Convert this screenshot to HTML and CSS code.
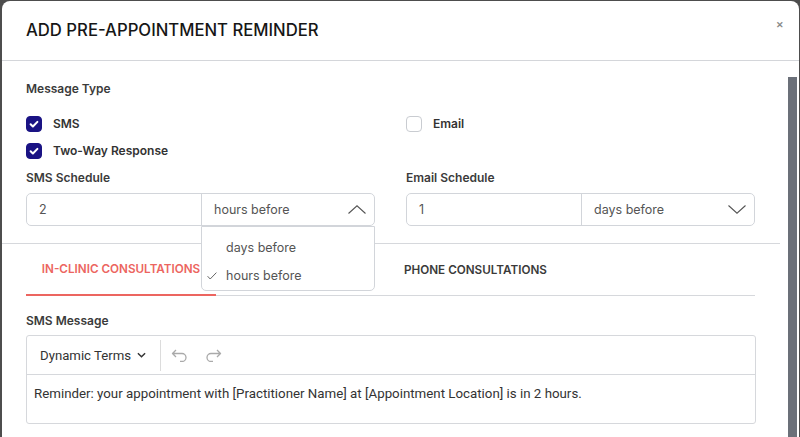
FILE: index.html
```html
<!DOCTYPE html>
<html>
<head>
<meta charset="utf-8">
<link rel="stylesheet" href="styles.css">
</head>
<body>
<div class="modal">
  <div class="modal-header">
    <h1 class="title">ADD PRE-APPOINTMENT REMINDER</h1>
    <span class="close">&#x2715;</span>
  </div>
  <div class="modal-body">
    <div class="content">
      <div class="section-label">Message Type</div>
      <div class="grid">
        <div class="col">
          <label class="check-row"><span class="box checked"><svg viewBox="0 0 16 16" width="16" height="16"><path d="M4.6 8.2l2.3 2.3 4.5-4.6" fill="none" stroke="#fff" stroke-width="2" stroke-linecap="round" stroke-linejoin="round"/></svg></span><span class="check-label">SMS</span></label>
          <label class="check-row second"><span class="box checked"><svg viewBox="0 0 16 16" width="16" height="16"><path d="M4.6 8.2l2.3 2.3 4.5-4.6" fill="none" stroke="#fff" stroke-width="2" stroke-linecap="round" stroke-linejoin="round"/></svg></span><span class="check-label">Two-Way Response</span></label>
        </div>
        <div class="col">
          <label class="check-row"><span class="box"></span><span class="check-label">Email</span></label>
        </div>
      </div>
      <div class="grid schedules">
        <div class="col">
          <div class="field-label">SMS Schedule</div>
          <div class="input-group">
            <div class="num">2</div>
            <div class="select open">
              <span>hours before</span>
              <svg class="chev" viewBox="0 0 18 9" width="18" height="9"><path d="M0.5 8.5L9 0.8l8.5 7.7" fill="none" stroke="#555" stroke-width="1.1"/></svg>
              <div class="menu">
                <div class="item">days before</div>
                <div class="item selected"><svg class="tick" viewBox="0 0 10 8" width="10" height="8"><path d="M0.6 4.2l2.6 2.8L9.4 0.6" fill="none" stroke="#666" stroke-width="1"/></svg>hours before</div>
              </div>
            </div>
          </div>
        </div>
        <div class="col">
          <div class="field-label">Email Schedule</div>
          <div class="input-group">
            <div class="num">1</div>
            <div class="select">
              <span>days before</span>
              <svg class="chev" viewBox="0 0 18 9" width="18" height="9"><path d="M0.5 0.5L9 8.2l8.5-7.7" fill="none" stroke="#555" stroke-width="1.1"/></svg>
            </div>
          </div>
        </div>
      </div>
      <div class="divider"></div>
      <div class="tabs">
        <div class="tab active">IN-CLINIC CONSULTATIONS</div>
        <div class="tab second-tab">PHONE CONSULTATIONS</div>
      </div>
      <div class="field-label msg-label">SMS Message</div>
      <div class="editor">
        <div class="toolbar">
          <div class="terms">Dynamic Terms <svg viewBox="0 0 10 6" width="9" height="6"><path d="M1 1l4 4 4-4" fill="none" stroke="#333" stroke-width="1.6"/></svg></div>
          <div class="sep"></div>
          <svg class="hist" viewBox="0 0 18 14" width="18" height="14"><path d="M5 2L1.5 5.5 5 9M1.5 5.5h9.5a4 4 0 0 1 0 8H9" fill="none" stroke="#aaa" stroke-width="1.3" stroke-linejoin="round"/></svg>
          <svg class="hist" viewBox="0 0 18 14" width="18" height="14"><path d="M13 2l3.5 3.5L13 9M16.5 5.5H7a4 4 0 0 0 0 8h2" fill="none" stroke="#aaa" stroke-width="1.3" stroke-linejoin="round"/></svg>
        </div>
        <div class="editor-body">Reminder: your appointment with [Practitioner Name] at [Appointment Location] is in 2 hours.</div>
      </div>
    </div>
    <div class="scrollbar"><div class="thumb"></div></div>
  </div>
</div>
</body>
</html>
```

FILE: styles.css
```css
* { box-sizing: border-box; }
html, body { margin: 0; padding: 0; height: 100%; }
body {
  background: #4d4d4d;
  font-family: Inter, "Noto Sans", sans-serif;
  overflow: hidden;
}
.modal {
  margin: 1px 1px 0 2px;
  height: 436px;
  background: #fff;
  border-radius: 8px 8px 0 0;
  display: flex;
  flex-direction: column;
  overflow: hidden;
}
.modal-header {
  height: 60px;
  border-bottom: 1px solid #d4d6da;
  display: flex;
  align-items: center;
  justify-content: space-between;
  padding: 0 15px 0 24px;
  flex: none;
}
.title {
  margin: 0;
  font-size: 16.7px;
  font-weight: 500;
  color: #161616;
  letter-spacing: 0;
  padding-bottom: 1px;
}
.close {
  font-size: 9px;
  color: #8a8a8a;
  font-weight: 700;
  margin-top: -12px;
}
.modal-body {
  flex: 1;
  display: flex;
  min-height: 0;
}
.content {
  width: 778px;
  padding: 20px 25px 0 24px;
  flex: none;
}
.scrollbar {
  flex: 1;
  padding: 16px 2px 0 8px;
}
.thumb {
  background: #6b7079;
  height: 100%;
}
.section-label, .field-label {
  font-size: 12px;
  font-weight: 600;
  color: #3b3b3b;
  line-height: 16px;
}
.grid {
  display: grid;
  grid-template-columns: 349px 349px;
  column-gap: 31px;
}
.check-row {
  display: flex;
  align-items: center;
  height: 16px;
  margin-top: 19px;
}
.check-row.second { margin-top: 11px; }
.box {
  width: 16px;
  height: 16px;
  border-radius: 4px;
  border: 1px solid #c9ccd1;
  background: #fff;
  flex: none;
  display: flex;
}
.box.checked {
  background: #1a1384;
  border-color: #1a1384;
}
.box.checked svg { margin: -1px; }
.check-label {
  margin-left: 11px;
  font-size: 12px;
  font-weight: 600;
  color: #333;
  line-height: 16px;
  padding-bottom: 1px;
}
.schedules { margin-top: 11px; }
.field-label { margin-bottom: 7px; }
.input-group {
  display: flex;
  height: 33px;
  border: 1px solid #d2d5da;
  border-radius: 5px;
}
.num {
  width: 174px;
  padding-left: 12px;
  font-size: 12.5px;
  color: #555;
  display: flex;
  align-items: center;
}
.select {
  flex: 1;
  border-left: 1px solid #d2d5da;
  padding: 0 8px 0 12px;
  display: flex;
  align-items: center;
  justify-content: space-between;
  font-size: 12.5px;
  color: #555;
  position: relative;
}
.menu {
  position: absolute;
  left: -1px;
  right: -1px;
  top: 32px;
  height: 65px;
  background: #fff;
  border: 1px solid #d2d5da;
  border-radius: 0 0 5px 5px;
  padding-top: 6px;
  z-index: 2;
}
.item {
  height: 28px;
  display: flex;
  align-items: center;
  padding-left: 24px;
  font-size: 12.5px;
  color: #555;
  position: relative;
}
.tick {
  position: absolute;
  left: 5px;
  top: 11px;
}
.divider {
  height: 1px;
  background: #d6d8dc;
  margin: 17px -25px 0 -24px;
}
.tabs {
  display: flex;
  height: 52px;
  border-bottom: 1px solid #d6d8dc;
}
.tab {
  font-size: 11.7px;
  font-weight: 600;
  color: #3a3a3a;
  display: flex;
  align-items: center;
}
.tab.active {
  width: 190px;
  justify-content: center;
  color: #ec6560;
  border-bottom: 2px solid #ec6560;
  margin-bottom: -1px;
}
.second-tab { margin-left: 188px; }
.msg-label { margin-top: 17px; margin-bottom: 6px; }
.editor {
  border: 1px solid #d6d8dc;
  border-radius: 3px;
  width: 730px;
}
.toolbar {
  height: 39px;
  border-bottom: 1px solid #d6d8dc;
  display: flex;
  align-items: center;
  padding-left: 13px;
}
.terms {
  font-family: Roboto, sans-serif;
  font-size: 13.2px;
  color: #333;
  display: flex;
  align-items: center;
  gap: 6px;
}
.sep {
  width: 1px;
  height: 31px;
  background: #dcdcdc;
  margin: 0 10px 0 14px;
}
.hist { margin-right: 15px; }
.editor-body {
  height: 48px;
  padding: 11px 0 0 7px;
  font-family: Roboto, sans-serif;
  font-size: 13.3px;
  color: #333;
}
```
